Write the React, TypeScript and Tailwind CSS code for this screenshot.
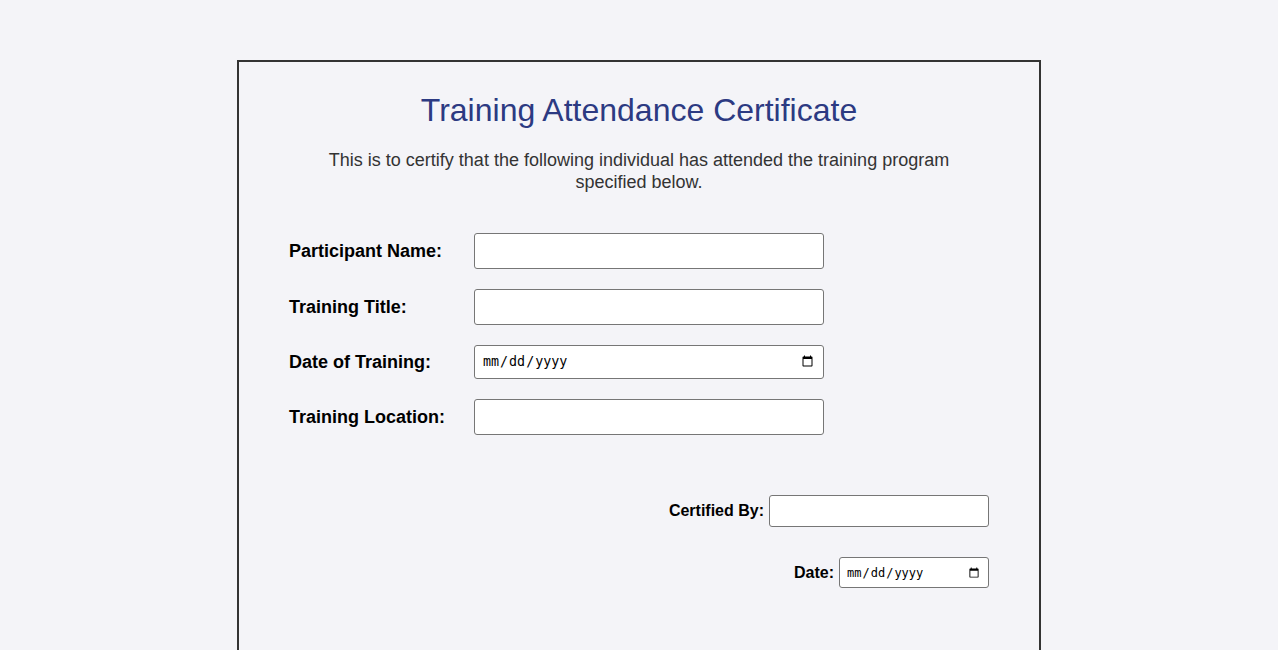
import React from "react";

const FIELDS = [
  { id: "participant", label: "Participant Name:", type: "text" },
  { id: "title", label: "Training Title:", type: "text" },
  { id: "date", label: "Date of Training:", type: "date" },
  { id: "location", label: "Training Location:", type: "text" },
];

export default function App() {
  return (
    <div className="min-h-screen bg-[#f4f4f8] pt-[60px] pb-10 font-['Liberation_Sans',Arial,sans-serif] text-black">
      <div className="mx-auto w-[804px] border-2 border-[#333] bg-[#f4f4f8] px-[50px] pt-[30px] pb-[80px]">
        {/* Heading */}
        <h1 className="text-center text-[32px] leading-[37px] text-[#2c3a82]">
          Training Attendance Certificate
        </h1>
        <p className="mx-auto mt-[20px] max-w-[660px] text-center text-[18px] leading-[22px] text-[#333]">
          This is to certify that the following individual has attended the training program
          specified below.
        </p>

        {/* Form fields */}
        <div className="mt-[40px] flex flex-col gap-[20px]">
          {FIELDS.map((f) => (
            <div key={f.id} className="flex items-center">
              <label htmlFor={f.id} className="w-[185px] shrink-0 text-[18px] font-bold">
                {f.label}
              </label>
              {f.type === "date" ? (
                <input
                  id={f.id}
                  type="date"
                  className="h-[34px] w-[350px] rounded-[3px] border border-[#767676] bg-white px-[7px] font-['DejaVu_Sans_Mono',monospace] text-[13.33px]"
                />
              ) : (
                <input
                  id={f.id}
                  type="text"
                  className="h-[36px] w-[350px] rounded-[3px] border border-[#767676] bg-white px-[8px] text-[16px]"
                />
              )}
            </div>
          ))}
        </div>

        {/* Signature */}
        <div className="mt-[60px] flex flex-col items-end gap-[30px]">
          <div className="flex items-center gap-[5px]">
            <label htmlFor="certified" className="text-[16px] font-bold">
              Certified By:
            </label>
            <input
              id="certified"
              type="text"
              className="h-[32px] w-[220px] rounded-[3px] border border-[#767676] bg-white px-[6px] text-[16px]"
            />
          </div>
          <div className="flex items-center gap-[5px]">
            <label htmlFor="signdate" className="text-[16px] font-bold">
              Date:
            </label>
            <input
              id="signdate"
              type="date"
              className="h-[31px] w-[150px] rounded-[3px] border border-[#767676] bg-white px-[6px] font-['DejaVu_Sans_Mono',monospace] text-[12px]"
            />
          </div>
        </div>
      </div>
    </div>
  );
}
